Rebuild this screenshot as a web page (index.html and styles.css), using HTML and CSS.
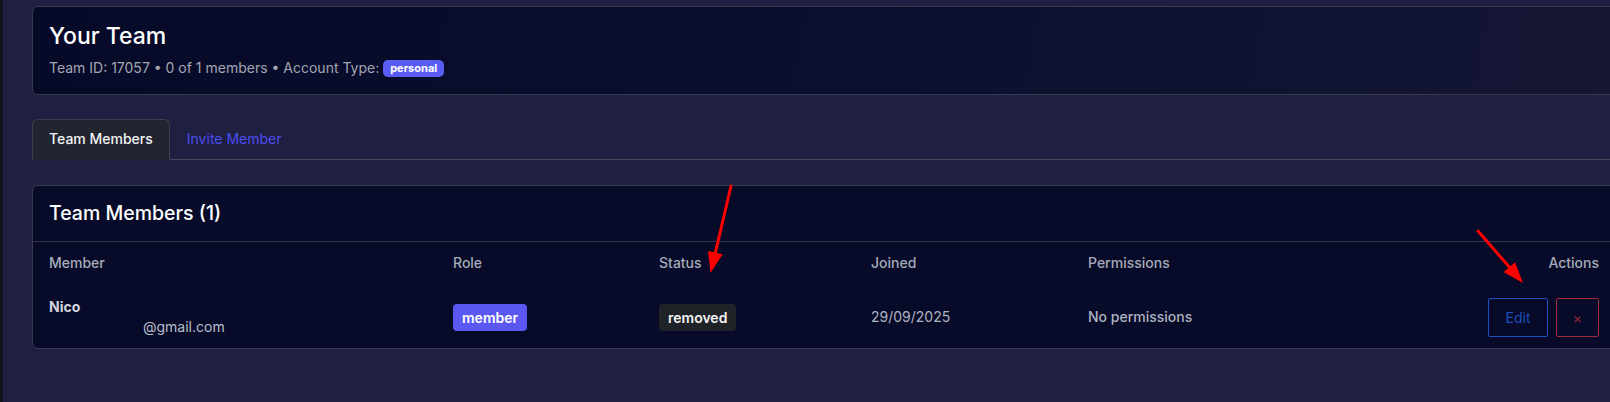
FILE: index.html
```html
<!DOCTYPE html>
<html lang="en">
<head>
<meta charset="utf-8">
<title>Your Team</title>
<link rel="stylesheet" href="styles.css">
</head>
<body>
<div class="layout">
  <aside class="rail"></aside>
  <main class="main">
    <section class="card team-card">
      <h1 class="team-title">Your Team</h1>
      <p class="team-meta">Team ID: 17057 • 0 of 1 members • Account Type: <span class="badge-personal">personal</span></p>
    </section>

    <nav class="tabs">
      <a class="tab tab-active">Team Members</a>
      <a class="tab tab-link">Invite Member</a>
    </nav>

    <section class="card members-card">
      <header class="members-head">
        <h2 class="members-title">Team Members (1)</h2>
      </header>
      <table class="members-table">
        <colgroup>
          <col class="c-member">
          <col class="c-role">
          <col class="c-status">
          <col class="c-joined">
          <col class="c-perm">
          <col class="c-actions">
        </colgroup>
        <thead>
          <tr>
            <th>Member</th>
            <th>Role</th>
            <th>Status</th>
            <th>Joined</th>
            <th>Permissions</th>
            <th class="th-actions">Actions</th>
          </tr>
        </thead>
        <tbody>
          <tr>
            <td>
              <div class="member-name">Nico</div>
              <div class="member-email">@gmail.com</div>
            </td>
            <td><span class="pill pill-role">member</span></td>
            <td><span class="pill pill-status">removed</span></td>
            <td class="cell-date">29/09/2025</td>
            <td class="cell-perm">No permissions</td>
            <td>
              <div class="actions">
                <button class="btn btn-edit">Edit</button>
                <button class="btn btn-remove">×</button>
              </div>
            </td>
          </tr>
        </tbody>
      </table>
    </section>
  </main>
</div>

<svg class="annotations" width="1610" height="402" viewBox="0 0 1610 402" aria-hidden="true">
  <line x1="731" y1="186" x2="715.4" y2="252.6" stroke="#ff0000" stroke-width="3" stroke-linecap="round"/>
  <polygon points="710.5,273 722.7,254.3 708.1,250.9" fill="#ff0000"/>
  <line x1="1478" y1="231" x2="1509.3" y2="267.1" stroke="#ff0000" stroke-width="3" stroke-linecap="round"/>
  <polygon points="1523,283 1503.6,272.0 1515.0,262.2" fill="#ff0000"/>
</svg>
</body>
</html>
```

FILE: styles.css
```css
* { box-sizing: border-box; }

html, body {
  margin: 0;
  padding: 0;
}

body {
  width: 1610px;
  height: 402px;
  overflow: hidden;
  background: #1f2041;
  font-family: Inter, "Noto Sans", "Liberation Sans", sans-serif;
  color: #e5e7eb;
  position: relative;
}

.layout {
  display: flex;
  min-height: 402px;
}

.rail {
  flex: 0 0 3px;
  background: #13151e;
}

.main {
  flex: 0 0 auto;
  width: 1584px;
  margin-left: 29px;
  padding-top: 6px;
}

.card {
  border: 1px solid #383a4b;
  border-radius: 6px;
}

.team-card {
  background: linear-gradient(100deg, #060a28 0%, #0b0e2e 50%, #141634 100%);
  padding: 15px 16px 16px;
}

.team-title {
  margin: 0;
  font-size: 23px;
  line-height: 28px;
  font-weight: 500;
  color: #ffffff;
}

.team-meta {
  margin: 8px 0 0;
  font-size: 14px;
  line-height: 20px;
  color: #a3a7b3;
}

.badge-personal {
  display: inline-block;
  vertical-align: 1px;
  background: #5b5cf4;
  color: #ffffff;
  font-size: 11px;
  font-weight: 700;
  line-height: 17px;
  padding: 0 7px;
  border-radius: 5px;
}

.tabs {
  display: flex;
  margin-top: 24px;
  border-bottom: 1px solid #484a5a;
}

.tab {
  display: block;
  font-size: 14px;
  line-height: 20px;
  padding: 9px 16px 10px;
  border: 1px solid transparent;
  border-radius: 6px 6px 0 0;
  margin-bottom: -1px;
  font-weight: 500;
}

.tab-active {
  background: #22242f;
  border-color: #3c3e4c;
  border-bottom-color: #22242f;
  color: #f3f4f6;
}

.tab-link {
  color: #4b4ced;
  font-weight: 400;
}

.members-card {
  margin-top: 25px;
  background: #070b29;
  overflow: hidden;
}

.members-head {
  padding: 16px 16px;
  border-bottom: 1px solid #353749;
}

.members-title {
  margin: 0;
  font-size: 19.5px;
  line-height: 23px;
  font-weight: 500;
  color: #ffffff;
}

.members-table {
  width: 100%;
  border-collapse: collapse;
  table-layout: fixed;
}

.c-member { width: 404px; }
.c-role { width: 206px; }
.c-status { width: 212px; }
.c-joined { width: 217px; }
.c-actions { width: 150px; }

.members-table th {
  text-align: left;
  font-size: 14px;
  line-height: 20px;
  font-weight: 500;
  color: #a6abb8;
  padding: 11px 16px;
}

.members-table th.th-actions {
  text-align: right;
}

.members-table td {
  font-size: 14px;
  line-height: 20px;
  padding: 13px 16px 11px;
  vertical-align: middle;
  color: #aeb3c0;
}

.member-name {
  font-weight: 700;
  color: #d0d3db;
}

.member-email {
  padding-left: 94px;
  color: #b9bfcc;
}

.pill {
  display: inline-block;
  font-size: 14px;
  line-height: 19px;
  font-weight: 600;
  padding: 4px 9px;
  border-radius: 4px;
  color: #ffffff;
}

.pill-role {
  background: #5a57f2;
}

.pill-status {
  background: #1f2227;
  color: #f4f4f5;
}

.cell-date {
  color: #a8adb9;
}

.cell-perm {
  font-weight: 500;
  color: #b6bac6;
}

.actions {
  display: flex;
  justify-content: flex-end;
  gap: 8px;
}

.btn {
  font-family: inherit;
  font-size: 14px;
  line-height: 19px;
  padding: 9px 16px;
  background: transparent;
  border-radius: 2px;
  cursor: pointer;
}

.btn-edit {
  border: 1px solid #1d4fc4;
  color: #1f4fbd;
  width: 60px;
}

.btn-remove {
  border: 1px solid #a32a3b;
  color: #9c2437;
  width: 43px;
  padding: 9px 0;
}

.annotations {
  position: absolute;
  left: 0;
  top: 0;
  pointer-events: none;
}
```
